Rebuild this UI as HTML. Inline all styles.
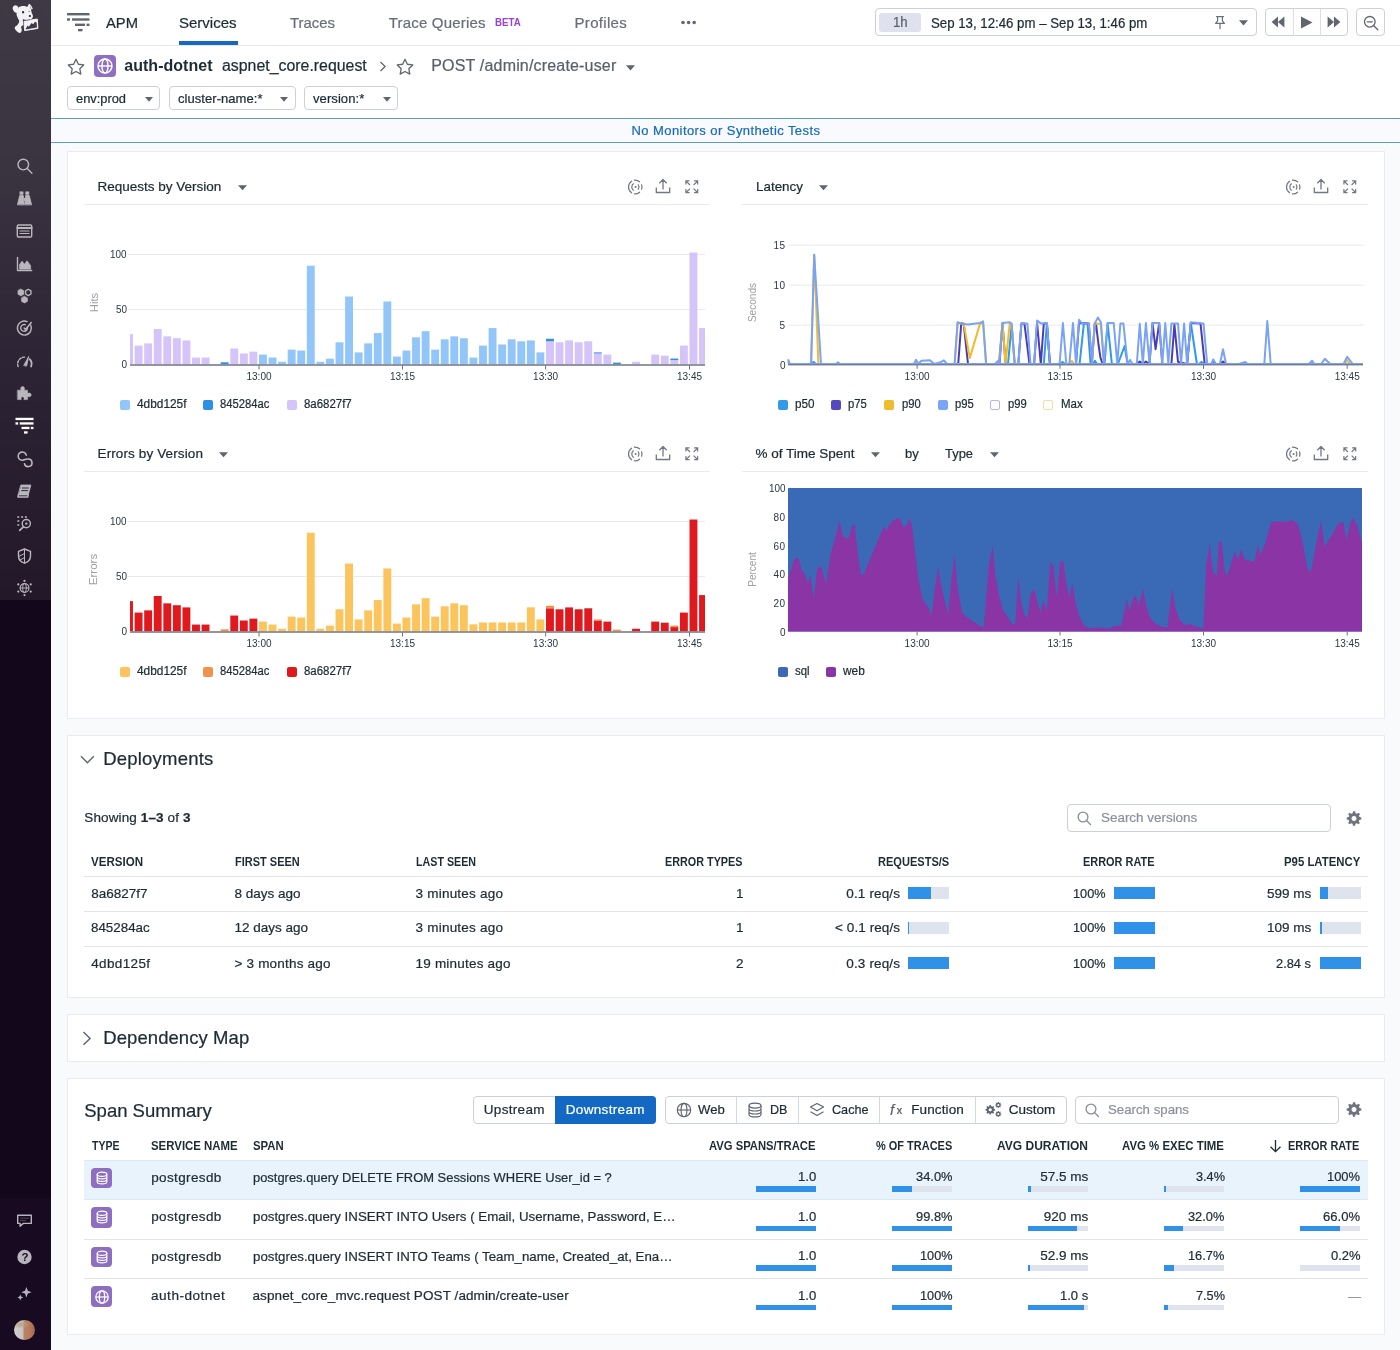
<!DOCTYPE html>
<html lang="en"><head><meta charset="utf-8"><title>APM Service - auth-dotnet</title>
<style>
*{box-sizing:border-box;margin:0;padding:0}
html,body{width:1400px;height:1350px;overflow:hidden;background:#f9fafc;font-family:"Liberation Sans",sans-serif;}
#root{position:relative;width:1400px;height:1350px;overflow:hidden;will-change:transform}
#root>div,#root>span,#root>svg{position:absolute;}
#root>svg{overflow:visible}
#root>span{white-space:nowrap;display:block;transform-origin:0 50%;-webkit-text-stroke:.22px currentColor}
</style></head>
<body><div id="root">
<div style="left:50px;top:0px;width:1350px;height:118px;background:#fff;"></div>
<div style="left:50px;top:45px;width:1350px;height:1px;background:#e6e8ee;"></div>
<div style="left:50px;top:118px;width:1350px;height:25px;background:#f8fafd;border-top:1.5px solid #5b9bd3;border-bottom:1.5px solid #5b9bd3;"></div>
<span style="left:631.50px;top:124.00px;font-size:13px;line-height:13px;color:#1a6bb8;letter-spacing:0.429px;">No Monitors or Synthetic Tests</span>
<div style="left:0px;top:0px;width:50.6px;height:600px;background:linear-gradient(180deg,#3f3945 0%,#3a3340 28%,#2c2334 62%,#221829 100%);"></div>
<div style="left:0px;top:600px;width:50.6px;height:598px;background:#13071b;"></div>
<div style="left:0px;top:1198px;width:50.6px;height:152px;background:#170a21;"></div>
<svg style="left:0;top:0" width="50" height="1350" viewBox="0 0 50 1350"><g fill="#f3f1f5"><ellipse cx="15.9" cy="9" rx="3" ry="3.7" transform="rotate(-22 15.9 9)"/><path d="M18.6 7.6C20 6.2 23.5 5.6 26.2 6.6L27.3 6.9 29 3.8C30.6 4.6 32.2 6.6 32.8 8.9L30.9 9.4C31.4 11 31.6 12.4 31.9 13.4 32.6 14.4 33.1 15.6 32.9 16.8 32.6 18.2 31.8 19 30.6 19.4 28.5 20.3 25 20.3 22.8 19.6L22.9 22 23.2 25.2C22.2 25.6 21.3 26.1 20.9 26.9 22 28.8 22.1 31.4 20.6 32.8 18.6 33.6 16.2 31.2 14.8 28.8 14.3 27.2 15.6 26 17 25.4 18.4 23.6 19.4 22 19.2 20.7 18.6 19.6 18 18.6 17.6 17.6 16.6 15.6 16.2 14.2 16.8 12.6 17.6 11 18.2 9.4 18.6 7.6Z"/><path d="M24 21.3L37.3 19 37.9 28.4 24.6 30.6Z" stroke="#f3f1f5" stroke-width="1" stroke-linejoin="round"/></g><path d="M25.5 29.4L27.5 25.6 28.8 26.8 31.5 23 33.2 24.3 35 21.8 36.6 22.6 37 27.6Z" fill="#3f3945"/><path d="M29.6 5.6L31.6 8.4 30.6 8.8Z" fill="#8b8690"/><ellipse cx="23.1" cy="12.2" rx="1.1" ry="1.25" fill="#2b2530" transform="rotate(-20 23.1 12.2)"/><ellipse cx="29.9" cy="16.1" rx="1.15" ry="1" fill="#2b2530"/><circle cx="29.2" cy="11.4" r=".6" fill="#6b6670"/><path d="M23.2 19.4C25.2 20.6 28 20.5 30 19.4" fill="none" stroke="#4a4450" stroke-width=".7"/><g transform="translate(16.5 158)" fill="none" stroke="#bab6be" stroke-width="1.4" stroke-linecap="round" stroke-linejoin="round"><circle cx="6.8" cy="6.6" r="5.3"/><path d="M10.8 10.6l4.6 4.6"/></g><g transform="translate(16.5 190)" fill="none" stroke="#bab6be" stroke-width="1.4" stroke-linecap="round" stroke-linejoin="round"><path d="M1 14.5L3.2 5.5h3.6l.9 9zM15 14.5L12.8 5.5H9.2l-.9 9z" fill="#bab6be" stroke-width=".8"/><path d="M3.6 1.8h3v2.6h-3zM9.4 1.8h3v2.6h-3z" fill="#bab6be" stroke-width=".6"/><path d="M7.4 8h1.2v3H7.4z" fill="#bab6be" stroke="none"/></g><g transform="translate(16.5 223)" fill="none" stroke="#bab6be" stroke-width="1.4" stroke-linecap="round" stroke-linejoin="round"><rect x="0.8" y="2" width="14.4" height="12" rx="1.2"/><path d="M0.8 5h14.4" stroke-width="2"/><path d="M3.5 8h9M3.5 10.5h9" stroke-width="1.2"/></g><g transform="translate(16.5 256)" fill="none" stroke="#bab6be" stroke-width="1.4" stroke-linecap="round" stroke-linejoin="round"><path d="M1 1.5v13h14.2" /><path d="M3 13V8.5l2.6-3.4 2.3 3.2 2.6-3.6 3.7 5V13z" fill="#bab6be" stroke-width=".6"/></g><g transform="translate(16.5 288)" fill="none" stroke="#bab6be" stroke-width="1.4" stroke-linecap="round" stroke-linejoin="round"><path d="M4.4 1l3 1.7v3.5l-3 1.7-3-1.7V2.7zM8 8.2l3 1.7v3.5l-3 1.7-3-1.7V9.9z" fill="#bab6be" stroke-width=".5"/><path d="M11.8 1.3l2.7 1.6V6l-2.7 1.6L9.1 6V2.9z" stroke-width="1.3"/></g><g transform="translate(16.5 320)" fill="none" stroke="#bab6be" stroke-width="1.4" stroke-linecap="round" stroke-linejoin="round"><path d="M14.3 5.2A7 7 0 1 1 10.6 1.6" /><path d="M10.9 7.2A3.4 3.4 0 1 1 8.7 4.7"/><path d="M7.6 8l1.4 1.5L14.8 2.6" stroke-width="1.5"/></g><g transform="translate(16.5 353)" fill="none" stroke="#bab6be" stroke-width="1.4" stroke-linecap="round" stroke-linejoin="round"><path d="M1.6 13.5A7 7 0 0 1 8.6 4.1" stroke-dasharray="2.1 1.6"/><path d="M13.2 6.2A7 7 0 0 1 14.6 13.5" stroke-width="1.8"/><path d="M7.4 12.2L12.2 3.4l-2 9.4z" fill="#bab6be" stroke-width=".8"/></g><g transform="translate(16.5 385)" fill="none" stroke="#bab6be" stroke-width="1.4" stroke-linecap="round" stroke-linejoin="round"><path d="M1.2 5.2h3.4c-.9-1.9-.1-3.6 1.5-3.6s2.4 1.7 1.5 3.6H11v3.2c1.9-.9 3.7-.1 3.7 1.5s-1.8 2.4-3.7 1.5v3.2H7.4c.6-1.6 0-2.8-1.3-2.8s-1.9 1.2-1.3 2.8H1.2z" fill="#bab6be" stroke-width=".6"/></g><g fill="#ffffff"><rect x="15.5" y="417.8" width="18" height="2.3"/><rect x="15.5" y="422.3" width="2.6" height="2.3"/><rect x="19.7" y="422.3" width="13.8" height="2.3"/><rect x="21.5" y="426.8" width="8" height="2.3"/><rect x="30.8" y="426.8" width="2.7" height="2.3"/><rect x="24" y="431.3" width="3.6" height="2.3"/></g><g transform="translate(16.5 450.5)" fill="none" stroke="#bab6be" stroke-width="1.4" stroke-linecap="round" stroke-linejoin="round"><path d="M9.8 4.6A4.1 4.1 0 1 0 6.3 9.7C8.2 9.4 9.6 8.3 11.5 8.5A3.8 3.8 0 1 1 8 13.2" stroke-width="1.6"/></g><g transform="translate(16.5 483)" fill="none" stroke="#bab6be" stroke-width="1.4" stroke-linecap="round" stroke-linejoin="round"><path d="M4.6 2h9.8l-2.7 10H1.9z" fill="#bab6be" stroke-width=".8"/><path d="M1.9 12l-.5 2h9.8l.5-2" /><path d="M5.8 5h6M5.1 7.6h6" stroke="#2e2636" stroke-width="1"/></g><g transform="translate(16.5 515)" fill="none" stroke="#bab6be" stroke-width="1.4" stroke-linecap="round" stroke-linejoin="round"><path d="M0.8 2h2M4.6 2h2M8.4 2h2M0.8 6h2M0.8 10h2" stroke-width="1.7" stroke-linecap="butt"/><circle cx="9.8" cy="8.6" r="4.1"/><path d="M6.8 11.8L3.2 15.4" stroke-width="1.7"/><circle cx="9.8" cy="8.6" r="1.2" fill="#bab6be" stroke="none"/></g><g transform="translate(16.5 548)" fill="none" stroke="#bab6be" stroke-width="1.4" stroke-linecap="round" stroke-linejoin="round"><path d="M8 1l6 2.3v4.7c0 3.5-2.5 6-6 7.2C4.5 14 2 11.5 2 8V3.3z"/><path d="M8 1v14.2M8 5.5L2.3 8.5M8 9.5l-4.6 2.6" stroke-width="1"/></g><g transform="translate(16.5 580)" fill="none" stroke="#bab6be" stroke-width="1.4" stroke-linecap="round" stroke-linejoin="round"><circle cx="8" cy="8" r="4.4" stroke-width="1.1"/><ellipse cx="8" cy="8" rx="1.9" ry="4.4" stroke-width=".9"/><path d="M3.6 8h8.8" stroke-width=".9"/><g fill="#bab6be" stroke="none"><circle cx="8" cy="0.9" r="1.1"/><circle cx="8" cy="15.1" r="1.1"/><circle cx="1.8" cy="4.4" r="1.1"/><circle cx="14.2" cy="4.4" r="1.1"/><circle cx="1.8" cy="11.6" r="1.1"/><circle cx="14.2" cy="11.6" r="1.1"/></g></g><g transform="translate(16.5 1213)" fill="none" stroke="#b9b3bf" stroke-width="1.4" stroke-linecap="round" stroke-linejoin="round"><path d="M1.2 2.2h13.6v8.2H6.8L3.6 13.2v-2.8H1.2z"/><path d="M4 5.2h8M4 7.6h5" stroke-width=".7" opacity=".5"/></g><circle cx="24.5" cy="1257" r="7.2" fill="#b9b3bf"/><g fill="#b9b3bf"><path d="M26.4 1287l1.4 3.8 3.8 1.4-3.8 1.4-1.4 3.8-1.4-3.8-3.8-1.4 3.8-1.4z"/><path d="M20.3 1294.4l.85 2.15 2.15.85-2.15.85-.85 2.15-.85-2.15-2.15-.85 2.15-.85z"/></g></svg>
<span style="left:21.60px;top:1251.57px;font-size:11.5px;line-height:11.5px;color:#190d22;font-weight:700;-webkit-text-stroke:0;">?</span>
<div style="left:14.2px;top:1319.5px;width:20.8px;height:20.8px;border-radius:50%;background:radial-gradient(ellipse 45% 22% at 32% 22%,#b8a488 0%,rgba(184,164,136,0) 100%),linear-gradient(90deg,#d2cdce 0%,#c9c4c2 40%,#b98464 50%,#b6785a 78%,#96685a 100%);"></div>
<svg style="left:66px;top:12px" width="25" height="21" viewBox="0 0 25 21"><g fill="#61656f"><rect x="1" y="1" width="22.5" height="2.4"/><rect x="1" y="6.3" width="3" height="2.4"/><rect x="6" y="6.3" width="17.5" height="2.4"/><rect x="9" y="11.6" width="10" height="2.4"/><rect x="20.5" y="11.6" width="3" height="2.4"/><rect x="12" y="16.9" width="4.5" height="2.4"/></g></svg>
<span style="left:105.50px;top:14.80px;font-size:15px;line-height:15px;color:#1c2b34;transform:scaleX(0.9841);">APM</span>
<span style="left:179.00px;top:14.80px;font-size:15px;line-height:15px;color:#1c2b34;">Services</span>
<div style="left:179px;top:40.5px;width:59px;height:4.5px;background:#1668c1;"></div>
<span style="left:290.00px;top:14.80px;font-size:15px;line-height:15px;color:#6a6e7b;transform:scaleX(0.9934);">Traces</span>
<span style="left:388.75px;top:14.80px;font-size:15px;line-height:15px;color:#6a6e7b;letter-spacing:0.189px;">Trace Queries</span>
<span style="left:495.00px;top:17.31px;font-size:10.5px;line-height:10.5px;color:#9a40e0;font-weight:700;-webkit-text-stroke:0;transform:scaleX(0.9258);">BETA</span>
<span style="left:574.50px;top:14.80px;font-size:15px;line-height:15px;color:#6a6e7b;letter-spacing:0.317px;">Profiles</span>
<svg style="left:680px;top:19px" width="18" height="7" viewBox="0 0 18 7"><g fill="#61656f"><circle cx="3" cy="3.5" r="1.8"/><circle cx="8.6" cy="3.5" r="1.8"/><circle cx="14.2" cy="3.5" r="1.8"/></g></svg>
<div style="left:874.5px;top:8.3px;width:382px;height:27.7px;background:#fff;border:1px solid #ccd0dc;border-radius:4px;"></div>
<div style="left:879.3px;top:12.5px;width:42px;height:19.3px;background:#dfe2ee;border-radius:3px;"></div>
<span style="left:893.20px;top:15.45px;font-size:14px;line-height:14px;color:#5a5f6e;transform:scaleX(0.9372);">1h</span>
<span style="left:931.00px;top:15.65px;font-size:14px;line-height:14px;color:#1c2b34;transform:scaleX(0.9453);">Sep 13, 12:46 pm – Sep 13, 1:46 pm</span>
<svg style="left:1213px;top:15px" width="14" height="15" viewBox="0 0 14 15"><g fill="none" stroke="#6a6e7b" stroke-width="1.2" stroke-linejoin="round" stroke-linecap="round"><path d="M3.5 1.6h7M4.6 1.6v4.2L2.6 8.4h8.8L9.4 5.8V1.6M7 8.4v5.2"/></g></svg>
<svg style="left:1238.5px;top:19.5px" width="9" height="6" viewBox="0 0 9 6"><path d="M0 0.3h9L4.5 5.5z" fill="#61656f"/></svg>
<div style="left:1265px;top:8.3px;width:83px;height:27.7px;background:#fff;border:1px solid #ccd0dc;border-radius:4px;"></div>
<div style="left:1292.5px;top:9px;width:1px;height:26.5px;background:#dcdfe8;"></div>
<div style="left:1320px;top:9px;width:1px;height:26.5px;background:#dcdfe8;"></div>
<svg style="left:1271px;top:16px" width="14" height="12" viewBox="0 0 14 12"><path d="M7 0.5v11L0.6 6zM13.4 0.5v11L7 6z" fill="#61656f"/></svg>
<svg style="left:1300px;top:15.5px" width="13" height="13" viewBox="0 0 13 13"><path d="M1 0.5l11.5 6L1 12.5z" fill="#61656f"/></svg>
<svg style="left:1327px;top:16px" width="14" height="12" viewBox="0 0 14 12"><path d="M0.6 0.5v11L7 6zM7 0.5v11L13.4 6z" fill="#61656f"/></svg>
<div style="left:1356px;top:8.3px;width:28.5px;height:27.7px;background:#fff;border:1px solid #ccd0dc;border-radius:4px;"></div>
<svg style="left:1362.5px;top:14.5px" width="16" height="16" viewBox="0 0 16 16"><g fill="none" stroke="#61656f" stroke-width="1.3" stroke-linecap="round"><circle cx="6.8" cy="6.8" r="5.3"/><path d="M10.8 10.8l4 4M4.3 6.8h5"/></g></svg>
<svg style="left:67px;top:57.5px" width="18" height="18" viewBox="0 0 18 18"><path d="M9 1.3l2.35 4.95 5.4.7-3.95 3.75 1 5.4L9 13.45 4.2 16.1l1-5.4L1.25 6.95l5.4-.7z" fill="none" stroke="#61656f" stroke-width="1.3" stroke-linejoin="round"/></svg>
<div style="left:93.75px;top:55px;width:22px;height:22px;background:#8e6fc2;border-radius:4px;"><svg style="position:absolute;left:2px;top:2px" width="18" height="18" viewBox="0 0 16 16"><g fill="none" stroke="#fff" stroke-width="1.25"><circle cx="8" cy="8" r="6.2"/><ellipse cx="8" cy="8" rx="2.7" ry="6.2"/><path d="M1.8 8h12.4"/></g></svg></div>
<span style="left:124.25px;top:57.76px;font-size:16px;line-height:16px;color:#1c2b34;font-weight:700;-webkit-text-stroke:0;letter-spacing:0.027px;">auth-dotnet</span>
<span style="left:221.50px;top:57.76px;font-size:16px;line-height:16px;color:#1c2b34;transform:scaleX(0.9923);">aspnet_core.request</span>
<svg style="left:379px;top:61px" width="8" height="11" viewBox="0 0 8 11"><path d="M1.5 1l4.6 4.5L1.5 10" fill="none" stroke="#61656f" stroke-width="1.3"/></svg>
<svg style="left:395.5px;top:57.5px" width="18" height="18" viewBox="0 0 18 18"><path d="M9 1.3l2.35 4.95 5.4.7-3.95 3.75 1 5.4L9 13.45 4.2 16.1l1-5.4L1.25 6.95l5.4-.7z" fill="none" stroke="#61656f" stroke-width="1.3" stroke-linejoin="round"/></svg>
<span style="left:431.25px;top:57.76px;font-size:16px;line-height:16px;color:#5a5f6c;letter-spacing:0.177px;">POST /admin/create-user</span>
<svg style="left:625.5px;top:64.5px" width="9" height="6" viewBox="0 0 9 6"><path d="M0 0.3h9L4.5 5.5z" fill="#61656f"/></svg>
<div style="left:67px;top:86.25px;width:93px;height:24px;background:#fff;border:1px solid #ccd0dc;border-radius:4px;"></div>
<span style="left:76.25px;top:91.50px;font-size:13px;line-height:13px;color:#1c2b34;transform:scaleX(0.9883);">env:prod</span>
<svg style="left:144.5px;top:96.5px" width="8" height="5" viewBox="0 0 8 5"><path d="M0 0h8L4 4.8z" fill="#61656f"/></svg>
<div style="left:168.75px;top:86.25px;width:126.75px;height:24px;background:#fff;border:1px solid #ccd0dc;border-radius:4px;"></div>
<span style="left:178.00px;top:91.50px;font-size:13px;line-height:13px;color:#1c2b34;letter-spacing:0.053px;">cluster-name:*</span>
<svg style="left:280px;top:96.5px" width="8" height="5" viewBox="0 0 8 5"><path d="M0 0h8L4 4.8z" fill="#61656f"/></svg>
<div style="left:303.75px;top:86.25px;width:94.25px;height:24px;background:#fff;border:1px solid #ccd0dc;border-radius:4px;"></div>
<span style="left:313.00px;top:91.50px;font-size:13px;line-height:13px;color:#1c2b34;letter-spacing:0.084px;">version:*</span>
<svg style="left:382.5px;top:96.5px" width="8" height="5" viewBox="0 0 8 5"><path d="M0 0h8L4 4.8z" fill="#61656f"/></svg>
<div style="left:67px;top:151px;width:1317.5px;height:567.5px;background:#fff;border:1px solid #e9ebf0;"></div>
<span style="left:97.50px;top:179.87px;font-size:13.5px;line-height:13.5px;color:#1c2b34;">Requests by Version</span>
<svg style="left:237.5px;top:184.5px" width="9" height="6" viewBox="0 0 9 6"><path d="M0 0.2h9L4.5 5.2z" fill="#5f6471"/></svg>
<div style="left:84px;top:204px;width:626px;height:1.2px;background:#e9ebf1;"></div>
<svg style="left:626.5px;top:178.5px" width="16" height="16" viewBox="0 0 16 16"><g fill="none" stroke="#737783" stroke-width="1.2" stroke-linecap="round"><path d="M4.6 2.2A7 7 0 0 0 4.6 13.8M7.4 1.1A7 7 0 0 1 12.6 2.8M7.4 14.9A7 7 0 0 0 12.6 13.2M14.6 5.8A7 7 0 0 1 14.6 10.2"/><path d="M6.4 4.8A4 4 0 0 0 6.4 11.2M11.3 5.8A4 4 0 0 1 11.3 10.2"/></g><circle cx="8.6" cy="8" r="1" fill="#737783"/></svg>
<svg style="left:655px;top:178px" width="16" height="16" viewBox="0 0 16 16"><g fill="none" stroke="#737783" stroke-width="1.3" stroke-linejoin="round"><path d="M1.3 9.5v5h13.4v-5M8 11.5V1.5M4.3 5.2L8 1.5l3.7 3.7"/></g></svg>
<svg style="left:684.7px;top:179.7px" width="13.6" height="13.6" viewBox="0 0 15 15"><g fill="none" stroke="#737783" stroke-width="1.3"><path d="M1 5V1h4M1.2 1.2l4.3 4.3M10 1h4v4M13.8 1.2L9.5 5.5M1 10v4h4M1.2 13.8l4.3-4.3M14 10v4h-4M13.8 13.8L9.5 9.5"/></g></svg>
<span style="left:755.50px;top:179.87px;font-size:13.5px;line-height:13.5px;color:#1c2b34;transform:scaleX(0.9937);">Latency</span>
<svg style="left:818.75px;top:184.5px" width="9" height="6" viewBox="0 0 9 6"><path d="M0 0.2h9L4.5 5.2z" fill="#5f6471"/></svg>
<div style="left:742px;top:204px;width:626px;height:1.2px;background:#e9ebf1;"></div>
<svg style="left:1284.5px;top:178.5px" width="16" height="16" viewBox="0 0 16 16"><g fill="none" stroke="#737783" stroke-width="1.2" stroke-linecap="round"><path d="M4.6 2.2A7 7 0 0 0 4.6 13.8M7.4 1.1A7 7 0 0 1 12.6 2.8M7.4 14.9A7 7 0 0 0 12.6 13.2M14.6 5.8A7 7 0 0 1 14.6 10.2"/><path d="M6.4 4.8A4 4 0 0 0 6.4 11.2M11.3 5.8A4 4 0 0 1 11.3 10.2"/></g><circle cx="8.6" cy="8" r="1" fill="#737783"/></svg>
<svg style="left:1313px;top:178px" width="16" height="16" viewBox="0 0 16 16"><g fill="none" stroke="#737783" stroke-width="1.3" stroke-linejoin="round"><path d="M1.3 9.5v5h13.4v-5M8 11.5V1.5M4.3 5.2L8 1.5l3.7 3.7"/></g></svg>
<svg style="left:1342.7px;top:179.7px" width="13.6" height="13.6" viewBox="0 0 15 15"><g fill="none" stroke="#737783" stroke-width="1.3"><path d="M1 5V1h4M1.2 1.2l4.3 4.3M10 1h4v4M13.8 1.2L9.5 5.5M1 10v4h4M1.2 13.8l4.3-4.3M14 10v4h-4M13.8 13.8L9.5 9.5"/></g></svg>
<span style="left:97.50px;top:446.87px;font-size:13.5px;line-height:13.5px;color:#1c2b34;letter-spacing:0.122px;">Errors by Version</span>
<svg style="left:218.5px;top:451.5px" width="9" height="6" viewBox="0 0 9 6"><path d="M0 0.2h9L4.5 5.2z" fill="#5f6471"/></svg>
<div style="left:84px;top:471px;width:626px;height:1.2px;background:#e9ebf1;"></div>
<svg style="left:626.5px;top:445.5px" width="16" height="16" viewBox="0 0 16 16"><g fill="none" stroke="#737783" stroke-width="1.2" stroke-linecap="round"><path d="M4.6 2.2A7 7 0 0 0 4.6 13.8M7.4 1.1A7 7 0 0 1 12.6 2.8M7.4 14.9A7 7 0 0 0 12.6 13.2M14.6 5.8A7 7 0 0 1 14.6 10.2"/><path d="M6.4 4.8A4 4 0 0 0 6.4 11.2M11.3 5.8A4 4 0 0 1 11.3 10.2"/></g><circle cx="8.6" cy="8" r="1" fill="#737783"/></svg>
<svg style="left:655px;top:445px" width="16" height="16" viewBox="0 0 16 16"><g fill="none" stroke="#737783" stroke-width="1.3" stroke-linejoin="round"><path d="M1.3 9.5v5h13.4v-5M8 11.5V1.5M4.3 5.2L8 1.5l3.7 3.7"/></g></svg>
<svg style="left:684.7px;top:446.7px" width="13.6" height="13.6" viewBox="0 0 15 15"><g fill="none" stroke="#737783" stroke-width="1.3"><path d="M1 5V1h4M1.2 1.2l4.3 4.3M10 1h4v4M13.8 1.2L9.5 5.5M1 10v4h4M1.2 13.8l4.3-4.3M14 10v4h-4M13.8 13.8L9.5 9.5"/></g></svg>
<span style="left:755.50px;top:446.87px;font-size:13.5px;line-height:13.5px;color:#1c2b34;">% of Time Spent</span>
<svg style="left:870.75px;top:451.5px" width="9" height="6" viewBox="0 0 9 6"><path d="M0 0.2h9L4.5 5.2z" fill="#5f6471"/></svg>
<span style="left:905.00px;top:446.87px;font-size:13.5px;line-height:13.5px;color:#1c2b34;transform:scaleX(0.9639);">by</span>
<span style="left:945.00px;top:446.87px;font-size:13.5px;line-height:13.5px;color:#1c2b34;transform:scaleX(0.9562);">Type</span>
<svg style="left:989.5px;top:451.5px" width="9" height="6" viewBox="0 0 9 6"><path d="M0 0.2h9L4.5 5.2z" fill="#5f6471"/></svg>
<div style="left:742px;top:471px;width:626px;height:1.2px;background:#e9ebf1;"></div>
<svg style="left:1284.5px;top:445.5px" width="16" height="16" viewBox="0 0 16 16"><g fill="none" stroke="#737783" stroke-width="1.2" stroke-linecap="round"><path d="M4.6 2.2A7 7 0 0 0 4.6 13.8M7.4 1.1A7 7 0 0 1 12.6 2.8M7.4 14.9A7 7 0 0 0 12.6 13.2M14.6 5.8A7 7 0 0 1 14.6 10.2"/><path d="M6.4 4.8A4 4 0 0 0 6.4 11.2M11.3 5.8A4 4 0 0 1 11.3 10.2"/></g><circle cx="8.6" cy="8" r="1" fill="#737783"/></svg>
<svg style="left:1313px;top:445px" width="16" height="16" viewBox="0 0 16 16"><g fill="none" stroke="#737783" stroke-width="1.3" stroke-linejoin="round"><path d="M1.3 9.5v5h13.4v-5M8 11.5V1.5M4.3 5.2L8 1.5l3.7 3.7"/></g></svg>
<svg style="left:1342.7px;top:446.7px" width="13.6" height="13.6" viewBox="0 0 15 15"><g fill="none" stroke="#737783" stroke-width="1.3"><path d="M1 5V1h4M1.2 1.2l4.3 4.3M10 1h4v4M13.8 1.2L9.5 5.5M1 10v4h4M1.2 13.8l4.3-4.3M14 10v4h-4M13.8 13.8L9.5 9.5"/></g></svg>
<svg style="left:129px;top:240px" width="582" height="135" viewBox="0 0 582 135"><defs><clipPath id="cp0"><rect x="1" y="0" width="575" height="124.5"/></clipPath></defs><path d="M-1 69.5H576" stroke="#e8eaf0" stroke-width="1"/><path d="M-1 14.5H576" stroke="#e8eaf0" stroke-width="1"/><g clip-path="url(#cp0)"><rect x="-3.94" y="94.14" width="7.9" height="30.36" fill="#d5c4f8"/><rect x="5.63" y="105.58" width="7.9" height="18.92" fill="#d5c4f8"/><rect x="15.20" y="103.38" width="7.9" height="21.12" fill="#d5c4f8"/><rect x="24.76" y="88.97" width="7.9" height="35.53" fill="#d5c4f8"/><rect x="34.33" y="96.34" width="7.9" height="28.16" fill="#d5c4f8"/><rect x="43.90" y="98.21" width="7.9" height="26.29" fill="#d5c4f8"/><rect x="53.46" y="100.41" width="7.9" height="24.09" fill="#d5c4f8"/><rect x="63.03" y="117.57" width="7.9" height="6.93" fill="#d5c4f8"/><rect x="72.60" y="117.57" width="7.9" height="6.93" fill="#d5c4f8"/><rect x="91.73" y="122.30" width="7.9" height="2.20" fill="#2f8fe4"/><rect x="101.30" y="108.55" width="7.9" height="15.95" fill="#d5c4f8"/><rect x="110.87" y="113.50" width="7.9" height="11.00" fill="#d5c4f8"/><rect x="120.43" y="111.63" width="7.9" height="12.87" fill="#d5c4f8"/><rect x="130.00" y="114.60" width="7.9" height="9.90" fill="#92c6f9"/><rect x="139.57" y="117.57" width="7.9" height="6.93" fill="#92c6f9"/><rect x="149.13" y="121.75" width="7.9" height="2.75" fill="#92c6f9"/><rect x="158.70" y="109.65" width="7.9" height="14.85" fill="#92c6f9"/><rect x="168.27" y="110.53" width="7.9" height="13.97" fill="#92c6f9"/><rect x="177.83" y="25.72" width="7.9" height="98.78" fill="#92c6f9"/><rect x="187.40" y="121.75" width="7.9" height="2.75" fill="#92c6f9"/><rect x="196.97" y="118.67" width="7.9" height="5.83" fill="#92c6f9"/><rect x="206.54" y="102.28" width="7.9" height="22.22" fill="#92c6f9"/><rect x="216.10" y="56.52" width="7.9" height="67.98" fill="#92c6f9"/><rect x="225.67" y="112.40" width="7.9" height="12.10" fill="#92c6f9"/><rect x="235.24" y="103.38" width="7.9" height="21.12" fill="#92c6f9"/><rect x="244.80" y="93.04" width="7.9" height="31.46" fill="#92c6f9"/><rect x="254.37" y="61.47" width="7.9" height="63.03" fill="#92c6f9"/><rect x="263.94" y="116.58" width="7.9" height="7.92" fill="#92c6f9"/><rect x="273.50" y="110.53" width="7.9" height="13.97" fill="#92c6f9"/><rect x="283.07" y="97.33" width="7.9" height="27.17" fill="#92c6f9"/><rect x="292.64" y="91.17" width="7.9" height="33.33" fill="#92c6f9"/><rect x="302.21" y="109.65" width="7.9" height="14.85" fill="#92c6f9"/><rect x="311.77" y="99.31" width="7.9" height="25.19" fill="#92c6f9"/><rect x="321.34" y="96.34" width="7.9" height="28.16" fill="#92c6f9"/><rect x="330.91" y="98.21" width="7.9" height="26.29" fill="#92c6f9"/><rect x="340.47" y="117.57" width="7.9" height="6.93" fill="#92c6f9"/><rect x="350.04" y="105.58" width="7.9" height="18.92" fill="#92c6f9"/><rect x="359.61" y="88.09" width="7.9" height="36.41" fill="#92c6f9"/><rect x="369.18" y="104.48" width="7.9" height="20.02" fill="#92c6f9"/><rect x="378.74" y="99.31" width="7.9" height="25.19" fill="#92c6f9"/><rect x="388.31" y="101.29" width="7.9" height="23.21" fill="#92c6f9"/><rect x="397.88" y="100.41" width="7.9" height="24.09" fill="#92c6f9"/><rect x="407.44" y="112.40" width="7.9" height="12.10" fill="#92c6f9"/><rect x="417.01" y="101.29" width="7.9" height="23.21" fill="#d5c4f8"/><rect x="417.01" y="98.76" width="7.9" height="2.53" fill="#2f8fe4"/><rect x="426.58" y="102.28" width="7.9" height="22.22" fill="#d5c4f8"/><rect x="436.14" y="100.41" width="7.9" height="24.09" fill="#d5c4f8"/><rect x="445.71" y="102.28" width="7.9" height="22.22" fill="#d5c4f8"/><rect x="455.28" y="101.29" width="7.9" height="23.21" fill="#d5c4f8"/><rect x="464.85" y="113.50" width="7.9" height="11.00" fill="#d5c4f8"/><rect x="464.85" y="112.40" width="7.9" height="1.10" fill="#2f8fe4"/><rect x="474.41" y="114.60" width="7.9" height="9.90" fill="#d5c4f8"/><rect x="483.98" y="122.63" width="7.9" height="1.87" fill="#2f8fe4"/><rect x="503.11" y="121.75" width="7.9" height="2.75" fill="#d5c4f8"/><rect x="522.25" y="114.60" width="7.9" height="9.90" fill="#d5c4f8"/><rect x="531.81" y="115.70" width="7.9" height="8.80" fill="#d5c4f8"/><rect x="541.38" y="120.10" width="7.9" height="4.40" fill="#d5c4f8"/><rect x="541.38" y="118.56" width="7.9" height="1.54" fill="#2f8fe4"/><rect x="550.95" y="105.58" width="7.9" height="18.92" fill="#d5c4f8"/><rect x="560.51" y="12.52" width="7.9" height="111.98" fill="#d5c4f8"/><rect x="570.08" y="88.09" width="7.9" height="36.41" fill="#d5c4f8"/></g><path d="M1 125.1H576" stroke="#6f7380" stroke-width="1.5"/><path d="M130 125.5v4" stroke="#6f7380" stroke-width="1"/><path d="M273.5 125.5v4" stroke="#6f7380" stroke-width="1"/><path d="M416.6 125.5v4" stroke="#6f7380" stroke-width="1"/><path d="M560.5 125.5v4" stroke="#6f7380" stroke-width="1"/></svg>
<span style="left:110.00px;top:249.84px;font-size:10px;line-height:10px;color:#2a3740;-webkit-text-stroke:0;transform:scaleX(0.9888);">100</span>
<span style="left:115.50px;top:304.94px;font-size:10px;line-height:10px;color:#2a3740;-webkit-text-stroke:0;transform:scaleX(0.9888);">50</span>
<span style="left:121.50px;top:359.94px;font-size:10px;line-height:10px;color:#2a3740;-webkit-text-stroke:0;">0</span>
<span style="left:246.50px;top:371.64px;font-size:10px;line-height:10px;color:#2a3740;-webkit-text-stroke:0;">13:00</span>
<span style="left:390.00px;top:371.64px;font-size:10px;line-height:10px;color:#2a3740;-webkit-text-stroke:0;">13:15</span>
<span style="left:533.10px;top:371.64px;font-size:10px;line-height:10px;color:#2a3740;-webkit-text-stroke:0;">13:30</span>
<span style="left:677.00px;top:371.64px;font-size:10px;line-height:10px;color:#2a3740;-webkit-text-stroke:0;">13:45</span>
<span style="left:84.50px;top:296.50px;font-size:11px;line-height:11px;color:#9fa0a9;transform:rotate(-90deg) scaleX(1.0158);transform-origin:50% 50%;-webkit-text-stroke:0;">Hits</span>
<div style="left:120.25px;top:399.6px;width:10.2px;height:10.2px;background:#92c6f9;border-radius:2px;"></div>
<span style="left:137.00px;top:398.44px;font-size:12px;line-height:12px;color:#1c2b34;transform:scaleX(0.9888);">4dbd125f</span>
<div style="left:203.25px;top:399.6px;width:10.2px;height:10.2px;background:#2f8fe4;border-radius:2px;"></div>
<span style="left:220.25px;top:398.44px;font-size:12px;line-height:12px;color:#1c2b34;transform:scaleX(0.9342);">845284ac</span>
<div style="left:287px;top:399.6px;width:10.2px;height:10.2px;background:#d5c4f8;border-radius:2px;"></div>
<span style="left:303.75px;top:398.44px;font-size:12px;line-height:12px;color:#1c2b34;transform:scaleX(0.9538);">8a6827f7</span>
<svg style="left:129px;top:507px" width="582" height="135" viewBox="0 0 582 135"><defs><clipPath id="cp267"><rect x="1" y="0" width="575" height="124.5"/></clipPath></defs><path d="M-1 69.5H576" stroke="#e8eaf0" stroke-width="1"/><path d="M-1 14.5H576" stroke="#e8eaf0" stroke-width="1"/><g clip-path="url(#cp267)"><rect x="-3.94" y="94.14" width="7.9" height="30.36" fill="#e0191e"/><rect x="5.63" y="105.58" width="7.9" height="18.92" fill="#e0191e"/><rect x="15.20" y="103.38" width="7.9" height="21.12" fill="#e0191e"/><rect x="24.76" y="88.97" width="7.9" height="35.53" fill="#e0191e"/><rect x="34.33" y="96.34" width="7.9" height="28.16" fill="#e0191e"/><rect x="43.90" y="98.21" width="7.9" height="26.29" fill="#e0191e"/><rect x="53.46" y="100.41" width="7.9" height="24.09" fill="#e0191e"/><rect x="63.03" y="117.57" width="7.9" height="6.93" fill="#e0191e"/><rect x="72.60" y="117.57" width="7.9" height="6.93" fill="#e0191e"/><rect x="91.73" y="122.30" width="7.9" height="2.20" fill="#f2924a"/><rect x="101.30" y="108.55" width="7.9" height="15.95" fill="#e0191e"/><rect x="110.87" y="113.50" width="7.9" height="11.00" fill="#e0191e"/><rect x="120.43" y="111.63" width="7.9" height="12.87" fill="#e0191e"/><rect x="130.00" y="114.60" width="7.9" height="9.90" fill="#fcc45c"/><rect x="139.57" y="117.57" width="7.9" height="6.93" fill="#fcc45c"/><rect x="149.13" y="121.75" width="7.9" height="2.75" fill="#fcc45c"/><rect x="158.70" y="109.65" width="7.9" height="14.85" fill="#fcc45c"/><rect x="168.27" y="110.53" width="7.9" height="13.97" fill="#fcc45c"/><rect x="177.83" y="25.72" width="7.9" height="98.78" fill="#fcc45c"/><rect x="187.40" y="121.75" width="7.9" height="2.75" fill="#fcc45c"/><rect x="196.97" y="118.67" width="7.9" height="5.83" fill="#fcc45c"/><rect x="206.54" y="102.28" width="7.9" height="22.22" fill="#fcc45c"/><rect x="216.10" y="56.52" width="7.9" height="67.98" fill="#fcc45c"/><rect x="225.67" y="112.40" width="7.9" height="12.10" fill="#fcc45c"/><rect x="235.24" y="103.38" width="7.9" height="21.12" fill="#fcc45c"/><rect x="244.80" y="93.04" width="7.9" height="31.46" fill="#fcc45c"/><rect x="254.37" y="61.47" width="7.9" height="63.03" fill="#fcc45c"/><rect x="263.94" y="116.58" width="7.9" height="7.92" fill="#fcc45c"/><rect x="273.50" y="110.53" width="7.9" height="13.97" fill="#fcc45c"/><rect x="283.07" y="97.33" width="7.9" height="27.17" fill="#fcc45c"/><rect x="292.64" y="91.17" width="7.9" height="33.33" fill="#fcc45c"/><rect x="302.21" y="109.65" width="7.9" height="14.85" fill="#fcc45c"/><rect x="311.77" y="99.31" width="7.9" height="25.19" fill="#fcc45c"/><rect x="321.34" y="96.34" width="7.9" height="28.16" fill="#fcc45c"/><rect x="330.91" y="98.21" width="7.9" height="26.29" fill="#fcc45c"/><rect x="340.47" y="117.35" width="7.9" height="7.15" fill="#fcc45c"/><rect x="350.04" y="115.48" width="7.9" height="9.02" fill="#fcc45c"/><rect x="359.61" y="115.48" width="7.9" height="9.02" fill="#fcc45c"/><rect x="369.18" y="115.48" width="7.9" height="9.02" fill="#fcc45c"/><rect x="378.74" y="115.48" width="7.9" height="9.02" fill="#fcc45c"/><rect x="388.31" y="115.48" width="7.9" height="9.02" fill="#fcc45c"/><rect x="397.88" y="100.30" width="7.9" height="24.20" fill="#fcc45c"/><rect x="407.44" y="112.40" width="7.9" height="12.10" fill="#fcc45c"/><rect x="417.01" y="101.29" width="7.9" height="23.21" fill="#e0191e"/><rect x="417.01" y="98.76" width="7.9" height="2.53" fill="#f2924a"/><rect x="426.58" y="102.28" width="7.9" height="22.22" fill="#e0191e"/><rect x="436.14" y="100.41" width="7.9" height="24.09" fill="#e0191e"/><rect x="445.71" y="102.28" width="7.9" height="22.22" fill="#e0191e"/><rect x="455.28" y="101.29" width="7.9" height="23.21" fill="#e0191e"/><rect x="464.85" y="113.50" width="7.9" height="11.00" fill="#e0191e"/><rect x="464.85" y="112.40" width="7.9" height="1.10" fill="#f2924a"/><rect x="474.41" y="114.60" width="7.9" height="9.90" fill="#e0191e"/><rect x="483.98" y="122.63" width="7.9" height="1.87" fill="#f2924a"/><rect x="503.11" y="121.75" width="7.9" height="2.75" fill="#e0191e"/><rect x="522.25" y="114.60" width="7.9" height="9.90" fill="#e0191e"/><rect x="531.81" y="115.70" width="7.9" height="8.80" fill="#e0191e"/><rect x="541.38" y="120.10" width="7.9" height="4.40" fill="#e0191e"/><rect x="541.38" y="118.56" width="7.9" height="1.54" fill="#f2924a"/><rect x="550.95" y="105.58" width="7.9" height="18.92" fill="#e0191e"/><rect x="560.51" y="12.52" width="7.9" height="111.98" fill="#e0191e"/><rect x="570.08" y="88.09" width="7.9" height="36.41" fill="#e0191e"/></g><path d="M1 125.1H576" stroke="#6f7380" stroke-width="1.5"/><path d="M130 125.5v4" stroke="#6f7380" stroke-width="1"/><path d="M273.5 125.5v4" stroke="#6f7380" stroke-width="1"/><path d="M416.6 125.5v4" stroke="#6f7380" stroke-width="1"/><path d="M560.5 125.5v4" stroke="#6f7380" stroke-width="1"/></svg>
<span style="left:110.00px;top:516.83px;font-size:10px;line-height:10px;color:#2a3740;-webkit-text-stroke:0;transform:scaleX(0.9888);">100</span>
<span style="left:115.50px;top:571.93px;font-size:10px;line-height:10px;color:#2a3740;-webkit-text-stroke:0;transform:scaleX(0.9888);">50</span>
<span style="left:121.50px;top:626.93px;font-size:10px;line-height:10px;color:#2a3740;-webkit-text-stroke:0;">0</span>
<span style="left:246.50px;top:638.63px;font-size:10px;line-height:10px;color:#2a3740;-webkit-text-stroke:0;">13:00</span>
<span style="left:390.00px;top:638.63px;font-size:10px;line-height:10px;color:#2a3740;-webkit-text-stroke:0;">13:15</span>
<span style="left:533.10px;top:638.63px;font-size:10px;line-height:10px;color:#2a3740;-webkit-text-stroke:0;">13:30</span>
<span style="left:677.00px;top:638.63px;font-size:10px;line-height:10px;color:#2a3740;-webkit-text-stroke:0;">13:45</span>
<span style="left:79.00px;top:563.50px;font-size:11px;line-height:11px;color:#9fa0a9;transform:rotate(-90deg) scaleX(1.0500);transform-origin:50% 50%;-webkit-text-stroke:0;">Errors</span>
<div style="left:120.25px;top:666.6px;width:10.2px;height:10.2px;background:#fcc45c;border-radius:2px;"></div>
<span style="left:137.00px;top:665.44px;font-size:12px;line-height:12px;color:#1c2b34;transform:scaleX(0.9888);">4dbd125f</span>
<div style="left:203.25px;top:666.6px;width:10.2px;height:10.2px;background:#f2924a;border-radius:2px;"></div>
<span style="left:220.25px;top:665.44px;font-size:12px;line-height:12px;color:#1c2b34;transform:scaleX(0.9342);">845284ac</span>
<div style="left:287px;top:666.6px;width:10.2px;height:10.2px;background:#e0191e;border-radius:2px;"></div>
<span style="left:303.75px;top:665.44px;font-size:12px;line-height:12px;color:#1c2b34;transform:scaleX(0.9538);">8a6827f7</span>
<svg style="left:787px;top:235px" width="582" height="140" viewBox="0 0 582 140"><path d="M2 10.2H577" stroke="#e8eaf0" stroke-width="1"/><path d="M2 50.2H577" stroke="#e8eaf0" stroke-width="1"/><path d="M2 90.1H577" stroke="#e8eaf0" stroke-width="1"/><polyline points="1.1,129.0 3.0,129.0 24.5,129.0 26.5,126.9 29.0,129.0 208.0,129.0 210.7,126.9 213.0,129.0 221.0,129.0 224.6,90.4 227.7,129.0 256.8,129.0 259.9,88.4 262.9,129.0 273.0,129.0 275.5,126.9 278.0,129.0 292.6,129.0 296.9,88.4 300.5,88.4 303.6,129.0 306.0,129.0 307.9,125.7 310.0,129.0 317.6,129.0 320.6,88.4 324.9,129.0 330.9,129.0 337.6,111.0 340.6,129.0 400.1,129.0 403.8,88.0 409.9,129.0 412.0,129.0 414.5,126.9 417.0,129.0 575.4,129.0" fill="none" stroke="#2f9ae8" stroke-width="2" stroke-linejoin="round"/><polyline points="1.1,126.9 3.0,129.0 168.0,129.0 171.2,129.0 174.3,88.0 176.7,88.8 181.0,129.0 184.0,129.0 212.5,129.0 215.5,88.0 218.6,129.0 231.3,129.0 234.4,88.4 237.4,88.4 242.5,129.0 247.1,129.0 250.1,88.0 253.8,129.0 256.8,88.4 259.9,88.4 262.9,129.0 289.0,129.0 292.0,88.0 301.8,88.4 304.8,129.0 307.8,88.4 309.0,88.8 311.5,109.5 313.5,122.9 315.7,129.0 350.0,129.0 352.8,126.5 355.8,129.0 358.9,126.5 362.5,129.0 365.5,88.0 368.6,114.2 372.2,88.0 375.3,129.0 384.4,129.0 387.4,89.6 391.0,126.9 400.1,129.0 403.8,88.0 413.5,88.4 417.7,129.0 424.0,129.0 426.3,126.5 429.0,129.0 433.0,129.0 436.0,126.5 439.0,129.0 575.4,129.0" fill="none" stroke="#4b3cb6" stroke-width="2" stroke-linejoin="round"/><polyline points="1.1,125.3 3.0,129.0 24.1,129.0 27.2,19.7 31.4,129.0 35.0,129.0 167.6,129.0 170.6,88.0 176.7,88.4 182.8,122.9 193.1,88.4 196.1,88.0 199.1,129.0 212.0,129.0 215.5,88.0 218.5,129.0 222.8,88.0 224.6,88.8 227.7,129.0 282.0,129.0 284.8,125.7 287.0,129.0 304.8,129.0 307.8,88.4 310.9,88.8 313.9,88.8 316.9,129.0 557.0,129.0 560.2,125.3 563.0,129.0 575.4,129.0" fill="none" stroke="#f0bb2c" stroke-width="2" stroke-linejoin="round"/><polyline points="1.1,124.3 2.6,129.0 5.9,129.0 20.9,129.0 24.1,129.0 27.2,19.7 34.0,129.0 49.0,129.0 51.0,127.3 53.0,129.0 61.0,129.0 63.0,129.0 126.9,129.0 129.1,124.8 131.2,129.0 134.4,125.7 143.0,125.3 147.3,129.0 153.7,127.2 156.9,125.3 160.1,129.0 167.6,129.0 170.6,87.2 173.6,88.4 180.9,89.6 193.1,88.0 196.1,86.4 199.1,129.0 208.9,129.0 210.7,126.1 211.9,129.0 215.5,88.0 222.8,87.2 224.6,88.8 227.7,129.0 231.3,129.0 234.4,88.4 240.4,88.4 243.5,129.0 247.1,129.0 250.1,85.6 253.8,88.4 259.9,88.0 262.9,129.0 272.6,129.0 275.9,88.0 279.3,129.0 282.3,129.0 286.0,88.0 289.0,129.0 292.0,84.8 295.1,88.4 301.8,88.4 304.8,129.0 307.8,88.4 310.9,82.5 313.9,87.2 316.9,129.0 320.6,88.0 326.7,88.0 330.3,129.0 333.4,88.4 336.4,88.4 340.6,129.0 343.1,124.9 345.5,129.0 349.8,129.0 352.8,88.8 355.8,129.0 358.9,88.0 362.5,129.0 365.5,88.0 372.2,88.0 375.3,129.0 378.3,88.0 381.3,129.0 384.4,88.4 391.0,88.4 394.1,129.0 397.1,88.4 400.1,129.0 403.8,87.2 416.5,88.4 420.2,129.0 424.4,129.0 426.3,124.5 428.7,129.0 432.9,129.0 436.0,114.2 439.0,129.0 452.1,129.0 458.2,126.9 460.6,129.0 477.3,129.0 480.3,86.0 483.7,129.0 522.0,129.0 525.0,125.7 527.4,129.0 534.1,129.0 537.8,123.7 543.2,129.0 556.6,129.0 560.2,121.8 565.7,129.0 575.4,129.0" fill="none" stroke="#7aa3f3" stroke-width="2" stroke-linejoin="round"/><path d="M1 129H575.4" stroke="#7aa3f3" stroke-width="1.8"/><path d="M1 129.7H576" stroke="#6f7380" stroke-width="1.4" opacity=".8"/><path d="M130.1 129.8v4" stroke="#6f7380" stroke-width="1"/><path d="M273 129.8v4" stroke="#6f7380" stroke-width="1"/><path d="M416.5 129.8v4" stroke="#6f7380" stroke-width="1"/><path d="M560.2 129.8v4" stroke="#6f7380" stroke-width="1"/></svg>
<span style="left:773.50px;top:241.33px;font-size:10px;line-height:10px;color:#2a3740;-webkit-text-stroke:0;letter-spacing:0.375px;">15</span>
<span style="left:773.50px;top:281.34px;font-size:10px;line-height:10px;color:#2a3740;-webkit-text-stroke:0;letter-spacing:0.375px;">10</span>
<span style="left:779.50px;top:321.24px;font-size:10px;line-height:10px;color:#2a3740;-webkit-text-stroke:0;">5</span>
<span style="left:780.00px;top:360.64px;font-size:10px;line-height:10px;color:#2a3740;-webkit-text-stroke:0;">0</span>
<span style="left:904.60px;top:371.64px;font-size:10px;line-height:10px;color:#2a3740;-webkit-text-stroke:0;">13:00</span>
<span style="left:1047.50px;top:371.64px;font-size:10px;line-height:10px;color:#2a3740;-webkit-text-stroke:0;">13:15</span>
<span style="left:1191.00px;top:371.64px;font-size:10px;line-height:10px;color:#2a3740;-webkit-text-stroke:0;">13:30</span>
<span style="left:1334.70px;top:371.64px;font-size:10px;line-height:10px;color:#2a3740;-webkit-text-stroke:0;">13:45</span>
<span style="left:730.50px;top:297.10px;font-size:11px;line-height:11px;color:#9fa0a9;transform:rotate(-90deg) scaleX(0.9163);transform-origin:50% 50%;-webkit-text-stroke:0;">Seconds</span>
<div style="left:778px;top:399.6px;width:10.2px;height:10.2px;background:#3399e8;border-radius:2px;"></div>
<span style="left:795.00px;top:398.44px;font-size:12px;line-height:12px;color:#1c2b34;transform:scaleX(0.9735);">p50</span>
<div style="left:831.25px;top:399.6px;width:10.2px;height:10.2px;background:#5848c0;border-radius:2px;"></div>
<span style="left:848.25px;top:398.44px;font-size:12px;line-height:12px;color:#1c2b34;transform:scaleX(0.9360);">p75</span>
<div style="left:884.25px;top:399.6px;width:10.2px;height:10.2px;background:#f0bb2c;border-radius:2px;"></div>
<span style="left:901.75px;top:398.44px;font-size:12px;line-height:12px;color:#1c2b34;transform:scaleX(0.9360);">p90</span>
<div style="left:937.5px;top:399.6px;width:10.2px;height:10.2px;background:#7aa5f4;border-radius:2px;"></div>
<span style="left:955.00px;top:398.44px;font-size:12px;line-height:12px;color:#1c2b34;transform:scaleX(0.9360);">p95</span>
<div style="left:990.2px;top:399.6px;width:10.2px;height:10.2px;border:1.3px solid #b9b1f0;border-radius:2px;background:#fff;"></div>
<span style="left:1008.00px;top:398.44px;font-size:12px;line-height:12px;color:#1c2b34;transform:scaleX(0.9360);">p99</span>
<div style="left:1043.2px;top:399.6px;width:10.2px;height:10.2px;border:1.3px solid #f5dea0;border-radius:2px;background:#fff;"></div>
<span style="left:1060.75px;top:398.44px;font-size:12px;line-height:12px;color:#1c2b34;transform:scaleX(0.9593);">Max</span>
<svg style="left:787px;top:482px" width="582" height="160" viewBox="0 0 582 160"><rect x="1" y="6" width="574" height="143.5" fill="#3a69b5"/><path d="M1,149.5 L1.1,96.6 L3.7,88.0 L6.9,78.4 L10.1,75.1 L12.3,78.4 L14.4,88.0 L17.6,91.2 L20.9,100.8 L23.4,93.4 L26.9,116.9 L29.9,88.0 L32.6,83.7 L34.8,85.9 L39.1,101.9 L43.4,73.0 L47.6,58.0 L52.6,38.7 L55.6,54.1 L58.4,55.4 L61.6,56.9 L64.8,44.1 L67.6,41.9 L70.6,68.7 L74.0,93.4 L76.6,92.3 L96.9,44.1 L99.1,48.4 L104.4,39.8 L110.4,36.1 L113.0,36.6 L116.2,45.1 L119.4,44.1 L122.2,36.6 L124.8,41.9 L128.0,68.7 L131.2,96.6 L135.5,116.9 L140.8,124.4 L144.7,133.0 L147.7,107.3 L151.1,84.8 L154.1,103.0 L158.0,120.1 L161.2,131.9 L164.4,98.7 L167.6,73.0 L170.8,107.3 L175.1,130.8 L179.4,135.1 L194.4,144.8 L196.6,145.8 L201.9,83.7 L205.6,63.4 L208.3,92.3 L211.6,111.6 L215.8,127.6 L220.1,134.1 L225.5,142.6 L228.3,141.6 L231.3,94.4 L234.1,120.1 L237.3,133.0 L240.5,136.2 L243.7,111.6 L246.9,107.3 L250.1,118.0 L253.3,130.8 L256.6,119.1 L259.8,128.7 L263.4,79.4 L266.2,83.7 L269.8,115.8 L273.3,79.4 L276.3,79.0 L279.1,100.8 L282.3,116.9 L283.0,109.4 L285.6,101.9 L288.4,120.1 L292.6,135.1 L296.9,143.7 L302.3,146.3 L310.9,145.4 L321.6,146.5 L328.0,144.1 L334.4,143.7 L337.0,130.8 L339.8,116.9 L342.6,128.7 L346.2,115.8 L349.0,113.7 L352.0,123.3 L355.9,106.2 L359.1,124.4 L363.4,136.2 L368.7,142.0 L375.1,144.8 L380.5,145.4 L382.6,126.6 L385.4,106.2 L388.0,124.4 L392.3,137.3 L397.6,143.3 L403.0,142.0 L409.4,144.8 L416.3,146.3 L419.1,83.7 L422.7,62.3 L426.1,90.1 L429.8,93.4 L431.9,60.1 L434.7,59.1 L437.7,90.1 L440.5,93.4 L447.6,69.8 L451.2,77.3 L454.0,67.0 L457.6,77.3 L465.1,79.4 L467.7,78.4 L471.1,62.3 L473.3,73.0 L478.0,62.3 L484.4,39.8 L497.3,39.8 L505.8,38.3 L510.6,41.9 L514.4,53.7 L520.8,88.0 L524.1,89.1 L529.4,60.1 L534.1,38.7 L537.6,64.4 L544.4,53.7 L550.8,41.9 L556.2,39.8 L559.4,58.0 L563.3,40.9 L566.3,35.5 L570.1,43.0 L574.8,60.1 L575,149.5Z" fill="#8a34a6"/><path d="M130.1 149.5v4" stroke="#6f7380" stroke-width="1"/><path d="M273 149.5v4" stroke="#6f7380" stroke-width="1"/><path d="M416.5 149.5v4" stroke="#6f7380" stroke-width="1"/><path d="M560.2 149.5v4" stroke="#6f7380" stroke-width="1"/></svg>
<span style="left:768.50px;top:484.14px;font-size:10px;line-height:10px;color:#2a3740;-webkit-text-stroke:0;transform:scaleX(0.9888);">100</span>
<span style="left:773.50px;top:512.84px;font-size:10px;line-height:10px;color:#2a3740;-webkit-text-stroke:0;letter-spacing:0.375px;">80</span>
<span style="left:773.50px;top:541.53px;font-size:10px;line-height:10px;color:#2a3740;-webkit-text-stroke:0;letter-spacing:0.375px;">60</span>
<span style="left:773.50px;top:570.24px;font-size:10px;line-height:10px;color:#2a3740;-webkit-text-stroke:0;letter-spacing:0.375px;">40</span>
<span style="left:773.50px;top:598.93px;font-size:10px;line-height:10px;color:#2a3740;-webkit-text-stroke:0;letter-spacing:0.375px;">20</span>
<span style="left:780.00px;top:627.63px;font-size:10px;line-height:10px;color:#2a3740;-webkit-text-stroke:0;">0</span>
<span style="left:904.60px;top:638.63px;font-size:10px;line-height:10px;color:#2a3740;-webkit-text-stroke:0;">13:00</span>
<span style="left:1047.50px;top:638.63px;font-size:10px;line-height:10px;color:#2a3740;-webkit-text-stroke:0;">13:15</span>
<span style="left:1191.00px;top:638.63px;font-size:10px;line-height:10px;color:#2a3740;-webkit-text-stroke:0;">13:30</span>
<span style="left:1334.70px;top:638.63px;font-size:10px;line-height:10px;color:#2a3740;-webkit-text-stroke:0;">13:45</span>
<span style="left:734.00px;top:564.20px;font-size:11px;line-height:11px;color:#9fa0a9;transform:rotate(-90deg) scaleX(0.9132);transform-origin:50% 50%;-webkit-text-stroke:0;">Percent</span>
<div style="left:778px;top:666.6px;width:10.2px;height:10.2px;background:#3a69b5;border-radius:2px;"></div>
<span style="left:795.00px;top:665.44px;font-size:12px;line-height:12px;color:#1c2b34;transform:scaleX(0.9450);">sql</span>
<div style="left:826.25px;top:666.6px;width:10.2px;height:10.2px;background:#8a34a6;border-radius:2px;"></div>
<span style="left:843.25px;top:665.44px;font-size:12px;line-height:12px;color:#1c2b34;transform:scaleX(0.9879);">web</span>
<div style="left:67px;top:735px;width:1317.5px;height:262.5px;background:#fff;border:1px solid #e9ebf0;"></div>
<svg style="left:79.5px;top:754.5px" width="15" height="10" viewBox="0 0 15 10"><path d="M1 1.2l6.4 6.6 6.4-6.6" fill="none" stroke="#5f6471" stroke-width="1.4"/></svg>
<span style="left:103.25px;top:750.14px;font-size:18.5px;line-height:18.5px;color:#1c2b34;letter-spacing:0.203px;">Deployments</span>
<span style="left:84.25px;top:810.57px;font-size:13.5px;line-height:13.5px;color:#1c2b34;letter-spacing:0.126px;">Showing <b>1–3</b> of <b>3</b></span>
<div style="left:1067px;top:803.75px;width:264px;height:28px;background:#fff;border:1px solid #ccd0dc;border-radius:4px;"></div>
<svg style="left:1077px;top:810.8px" width="15" height="15" viewBox="0 0 15 15"><g fill="none" stroke="#8a8d9a" stroke-width="1.3" stroke-linecap="round"><circle cx="6" cy="6" r="4.9"/><path d="M9.7 9.7l3.8 3.8"/></g></svg>
<span style="left:1100.75px;top:811.07px;font-size:13.5px;line-height:13.5px;color:#8d909d;transform:scaleX(0.9944);">Search versions</span>
<svg style="left:1345.5px;top:810.5px" width="16" height="15" viewBox="0 0 15.7 14.3"><path fill="#70747f" fill-rule="evenodd" d="M7 0h2l.4 1.9 1.3.55 1.65-1.05 1.4 1.4-1.05 1.65.55 1.3L15 6.15v2l-1.9.4-.55 1.3 1.05 1.65-1.4 1.4-1.65-1.05-1.3.55L8.85 14.3h-2l-.4-1.9-1.3-.55-1.65 1.05-1.4-1.4 1.05-1.65-.55-1.3L.700 8.15v-2l1.9-.4.55-1.3L2.1 2.8l1.4-1.4 1.65 1.05 1.3-.55zM7.85 4.7a2.45 2.45 0 1 0 .01 0z"/></svg>
<span style="left:91.25px;top:856.09px;font-size:12px;line-height:12px;color:#1c2b34;font-weight:700;-webkit-text-stroke:0;transform:scaleX(0.9627);">VERSION</span>
<span style="left:234.50px;top:856.09px;font-size:12px;line-height:12px;color:#1c2b34;font-weight:700;-webkit-text-stroke:0;transform:scaleX(0.9160);">FIRST SEEN</span>
<span style="left:415.50px;top:856.09px;font-size:12px;line-height:12px;color:#1c2b34;font-weight:700;-webkit-text-stroke:0;transform:scaleX(0.8910);">LAST SEEN</span>
<span style="left:665.00px;top:856.09px;font-size:12px;line-height:12px;color:#1c2b34;font-weight:700;-webkit-text-stroke:0;transform:scaleX(0.9010);">ERROR TYPES</span>
<span style="left:877.50px;top:856.09px;font-size:12px;line-height:12px;color:#1c2b34;font-weight:700;-webkit-text-stroke:0;transform:scaleX(0.9210);">REQUESTS/S</span>
<span style="left:1083.00px;top:856.09px;font-size:12px;line-height:12px;color:#1c2b34;font-weight:700;-webkit-text-stroke:0;transform:scaleX(0.9114);">ERROR RATE</span>
<span style="left:1283.75px;top:856.09px;font-size:12px;line-height:12px;color:#1c2b34;font-weight:700;-webkit-text-stroke:0;transform:scaleX(0.9476);">P95 LATENCY</span>
<div style="left:84px;top:876.25px;width:1284px;height:1px;background:#e1e4eb;"></div>
<div style="left:84px;top:911.25px;width:1284px;height:1px;background:#e1e4eb;"></div>
<div style="left:84px;top:946px;width:1284px;height:1px;background:#e1e4eb;"></div>
<span style="left:91.25px;top:886.57px;font-size:13.5px;line-height:13.5px;color:#1c2b34;">8a6827f7</span>
<span style="left:234.50px;top:886.57px;font-size:13.5px;line-height:13.5px;color:#1c2b34;">8 days ago</span>
<span style="left:415.50px;top:886.57px;font-size:13.5px;line-height:13.5px;color:#1c2b34;letter-spacing:0.224px;">3 minutes ago</span>
<span style="left:736.00px;top:886.57px;font-size:13.5px;line-height:13.5px;color:#1c2b34;">1</span>
<span style="left:846.25px;top:886.57px;font-size:13.5px;line-height:13.5px;color:#1c2b34;letter-spacing:0.152px;">0.1 req/s</span>
<div style="left:908.25px;top:887px;width:40.75px;height:12.2px;background:#dfe3ee;"></div>
<div style="left:908.25px;top:887px;width:22.4125px;height:12.2px;background:#2f92e8;"></div>
<span style="left:1073.00px;top:886.57px;font-size:13.5px;line-height:13.5px;color:#1c2b34;transform:scaleX(0.9412);">100%</span>
<div style="left:1114.25px;top:887px;width:40.25px;height:12.2px;background:#dfe3ee;"></div>
<div style="left:1114.25px;top:887px;width:40.25px;height:12.2px;background:#2f92e8;"></div>
<span style="left:1267.00px;top:886.57px;font-size:13.5px;line-height:13.5px;color:#1c2b34;">599 ms</span>
<div style="left:1320px;top:887px;width:40.5px;height:12.2px;background:#dfe3ee;"></div>
<div style="left:1320px;top:887px;width:8.1px;height:12.2px;background:#2f92e8;"></div>
<span style="left:91.25px;top:921.32px;font-size:13.5px;line-height:13.5px;color:#1c2b34;transform:scaleX(0.9905);">845284ac</span>
<span style="left:234.50px;top:921.32px;font-size:13.5px;line-height:13.5px;color:#1c2b34;">12 days ago</span>
<span style="left:415.50px;top:921.32px;font-size:13.5px;line-height:13.5px;color:#1c2b34;letter-spacing:0.224px;">3 minutes ago</span>
<span style="left:736.00px;top:921.32px;font-size:13.5px;line-height:13.5px;color:#1c2b34;">1</span>
<span style="left:835.00px;top:921.32px;font-size:13.5px;line-height:13.5px;color:#1c2b34;letter-spacing:0.083px;">&lt; 0.1 req/s</span>
<div style="left:908.25px;top:922px;width:40.75px;height:12.2px;background:#dfe3ee;"></div>
<div style="left:908.25px;top:922px;width:1.2px;height:12.2px;background:#2f92e8;"></div>
<span style="left:1073.00px;top:921.32px;font-size:13.5px;line-height:13.5px;color:#1c2b34;transform:scaleX(0.9412);">100%</span>
<div style="left:1114.25px;top:922px;width:40.25px;height:12.2px;background:#dfe3ee;"></div>
<div style="left:1114.25px;top:922px;width:40.25px;height:12.2px;background:#2f92e8;"></div>
<span style="left:1267.00px;top:921.32px;font-size:13.5px;line-height:13.5px;color:#1c2b34;">109 ms</span>
<div style="left:1320px;top:922px;width:40.5px;height:12.2px;background:#dfe3ee;"></div>
<div style="left:1320px;top:922px;width:1.62px;height:12.2px;background:#2f92e8;"></div>
<span style="left:91.25px;top:956.57px;font-size:13.5px;line-height:13.5px;color:#1c2b34;letter-spacing:0.348px;">4dbd125f</span>
<span style="left:234.50px;top:956.57px;font-size:13.5px;line-height:13.5px;color:#1c2b34;letter-spacing:0.196px;">&gt; 3 months ago</span>
<span style="left:415.50px;top:956.57px;font-size:13.5px;line-height:13.5px;color:#1c2b34;letter-spacing:0.207px;">19 minutes ago</span>
<span style="left:736.00px;top:956.57px;font-size:13.5px;line-height:13.5px;color:#1c2b34;">2</span>
<span style="left:846.25px;top:956.57px;font-size:13.5px;line-height:13.5px;color:#1c2b34;letter-spacing:0.152px;">0.3 req/s</span>
<div style="left:908.25px;top:957px;width:40.75px;height:12.2px;background:#dfe3ee;"></div>
<div style="left:908.25px;top:957px;width:40.75px;height:12.2px;background:#2f92e8;"></div>
<span style="left:1073.00px;top:956.57px;font-size:13.5px;line-height:13.5px;color:#1c2b34;transform:scaleX(0.9412);">100%</span>
<div style="left:1114.25px;top:957px;width:40.25px;height:12.2px;background:#dfe3ee;"></div>
<div style="left:1114.25px;top:957px;width:40.25px;height:12.2px;background:#2f92e8;"></div>
<span style="left:1276.25px;top:956.57px;font-size:13.5px;line-height:13.5px;color:#1c2b34;transform:scaleX(0.9516);">2.84 s</span>
<div style="left:1320px;top:957px;width:40.5px;height:12.2px;background:#dfe3ee;"></div>
<div style="left:1320px;top:957px;width:40.5px;height:12.2px;background:#2f92e8;"></div>
<div style="left:67px;top:1014px;width:1317.5px;height:47.5px;background:#fff;border:1px solid #e9ebf0;"></div>
<svg style="left:82px;top:1030.5px" width="10" height="15" viewBox="0 0 10 15"><path d="M1.5 1l6.6 6.4-6.6 6.4" fill="none" stroke="#5f6471" stroke-width="1.4"/></svg>
<span style="left:103.25px;top:1029.34px;font-size:18.5px;line-height:18.5px;color:#1c2b34;letter-spacing:0.076px;">Dependency Map</span>
<div style="left:67px;top:1078px;width:1317.5px;height:256.5px;background:#fff;border:1px solid #e9ebf0;"></div>
<span style="left:84.25px;top:1101.64px;font-size:18.5px;line-height:18.5px;color:#1c2b34;">Span Summary</span>
<div style="left:472.5px;top:1095.5px;width:183.5px;height:28.3px;background:#fff;border:1px solid #ccd0dc;border-radius:4px;"></div>
<div style="left:555px;top:1095.5px;width:101px;height:28.3px;background:#1268c3;border-radius:0 4px 4px 0;"></div>
<span style="left:483.75px;top:1103.07px;font-size:13.5px;line-height:13.5px;color:#1c2b34;letter-spacing:0.319px;">Upstream</span>
<span style="left:565.75px;top:1103.07px;font-size:13.5px;line-height:13.5px;color:#fff;letter-spacing:0.330px;">Downstream</span>
<div style="left:664.5px;top:1095.5px;width:402.5px;height:28.3px;background:#fff;border:1px solid #ccd0dc;border-radius:4px;"></div>
<div style="left:735.5px;top:1096.5px;width:1px;height:26.3px;background:#d5d8e2;"></div>
<div style="left:797.5px;top:1096.5px;width:1px;height:26.3px;background:#d5d8e2;"></div>
<div style="left:879.25px;top:1096.5px;width:1px;height:26.3px;background:#d5d8e2;"></div>
<div style="left:974.6px;top:1096.5px;width:1px;height:26.3px;background:#d5d8e2;"></div>
<svg style="left:675.5px;top:1102px" width="16" height="16" viewBox="0 0 16 16"><g fill="none" stroke="#5f6471" stroke-width="1.15"><circle cx="8" cy="8" r="6.7"/><ellipse cx="8" cy="8" rx="2.9" ry="6.7"/><path d="M1.3 8h13.4"/></g></svg>
<span style="left:698.25px;top:1103.07px;font-size:13.5px;line-height:13.5px;color:#1c2b34;transform:scaleX(0.9722);">Web</span>
<svg style="left:746.5px;top:1102px" width="16" height="16" viewBox="0 0 16 16"><g fill="none" stroke="#5f6471" stroke-width="1.15"><ellipse cx="8" cy="3.6" rx="6" ry="2.5"/><path d="M2 3.6v8.8c0 1.4 2.7 2.5 6 2.5s6-1.1 6-2.5V3.6M2 6.5c0 1.4 2.7 2.5 6 2.5s6-1.1 6-2.5M2 9.5c0 1.4 2.7 2.5 6 2.5s6-1.1 6-2.5"/></g></svg>
<span style="left:769.50px;top:1103.07px;font-size:13.5px;line-height:13.5px;color:#1c2b34;transform:scaleX(0.9326);">DB</span>
<svg style="left:808.5px;top:1102px" width="16" height="16" viewBox="0 0 16 16"><g fill="none" stroke="#5f6471" stroke-width="1.15" stroke-linejoin="round"><path d="M8 1.5l6.5 3.6L8 8.7 1.5 5.1z"/><path d="M1.5 9.8L8 13.4l6.5-3.6"/></g></svg>
<span style="left:831.75px;top:1103.07px;font-size:13.5px;line-height:13.5px;color:#1c2b34;transform:scaleX(0.9351);">Cache</span>
<span style="left:890.00px;top:1102.10px;font-size:15px;line-height:15px;color:#5f6471;font-family:"Liberation Serif",serif;"><i>f</i></span>
<span style="left:896.50px;top:1104.61px;font-size:10.5px;line-height:10.5px;color:#5f6471;font-weight:700;-webkit-text-stroke:0;">x</span>
<span style="left:911.25px;top:1103.07px;font-size:13.5px;line-height:13.5px;color:#1c2b34;letter-spacing:0.103px;">Function</span>
<svg style="left:985px;top:1104.5px" width="10.5" height="9.6" viewBox="0 0 15.7 14.3"><path fill="#5f6471" fill-rule="evenodd" d="M7 0h2l.4 1.9 1.3.55 1.65-1.05 1.4 1.4-1.05 1.65.55 1.3L15 6.15v2l-1.9.4-.55 1.3 1.05 1.65-1.4 1.4-1.65-1.05-1.3.55L8.85 14.3h-2l-.4-1.9-1.3-.55-1.65 1.05-1.4-1.4 1.05-1.65-.55-1.3L.700 8.15v-2l1.9-.4.55-1.3L2.1 2.8l1.4-1.4 1.65 1.05 1.3-.55zM7.85 4.7a2.45 2.45 0 1 0 .01 0z"/></svg>
<svg style="left:995.3px;top:1102px" width="6.6" height="6" viewBox="0 0 15.7 14.3"><path fill="#5f6471" fill-rule="evenodd" d="M7 0h2l.4 1.9 1.3.55 1.65-1.05 1.4 1.4-1.05 1.65.55 1.3L15 6.15v2l-1.9.4-.55 1.3 1.05 1.65-1.4 1.4-1.65-1.05-1.3.55L8.85 14.3h-2l-.4-1.9-1.3-.55-1.65 1.05-1.4-1.4 1.05-1.65-.55-1.3L.700 8.15v-2l1.9-.4.55-1.3L2.1 2.8l1.4-1.4 1.65 1.05 1.3-.55zM7.85 4.7a2.45 2.45 0 1 0 .01 0z"/></svg>
<svg style="left:995.3px;top:1110.6px" width="6.6" height="6" viewBox="0 0 15.7 14.3"><path fill="#5f6471" fill-rule="evenodd" d="M7 0h2l.4 1.9 1.3.55 1.65-1.05 1.4 1.4-1.05 1.65.55 1.3L15 6.15v2l-1.9.4-.55 1.3 1.05 1.65-1.4 1.4-1.65-1.05-1.3.55L8.85 14.3h-2l-.4-1.9-1.3-.55-1.65 1.05-1.4-1.4 1.05-1.65-.55-1.3L.700 8.15v-2l1.9-.4.55-1.3L2.1 2.8l1.4-1.4 1.65 1.05 1.3-.55zM7.85 4.7a2.45 2.45 0 1 0 .01 0z"/></svg>
<span style="left:1008.70px;top:1103.07px;font-size:13.5px;line-height:13.5px;color:#1c2b34;">Custom</span>
<div style="left:1075.3px;top:1095.5px;width:263.5px;height:28.3px;background:#fff;border:1px solid #ccd0dc;border-radius:4px;"></div>
<svg style="left:1085px;top:1102.5px" width="15" height="15" viewBox="0 0 15 15"><g fill="none" stroke="#8a8d9a" stroke-width="1.3" stroke-linecap="round"><circle cx="6" cy="6" r="4.9"/><path d="M9.7 9.7l3.8 3.8"/></g></svg>
<span style="left:1108.30px;top:1103.07px;font-size:13.5px;line-height:13.5px;color:#8d909d;transform:scaleX(0.9811);">Search spans</span>
<svg style="left:1345.5px;top:1102.3px" width="16" height="15" viewBox="0 0 15.7 14.3"><path fill="#70747f" fill-rule="evenodd" d="M7 0h2l.4 1.9 1.3.55 1.65-1.05 1.4 1.4-1.05 1.65.55 1.3L15 6.15v2l-1.9.4-.55 1.3 1.05 1.65-1.4 1.4-1.65-1.05-1.3.55L8.85 14.3h-2l-.4-1.9-1.3-.55-1.65 1.05-1.4-1.4 1.05-1.65-.55-1.3L.700 8.15v-2l1.9-.4.55-1.3L2.1 2.8l1.4-1.4 1.65 1.05 1.3-.55zM7.85 4.7a2.45 2.45 0 1 0 .01 0z"/></svg>
<span style="left:91.75px;top:1139.84px;font-size:12px;line-height:12px;color:#1c2b34;font-weight:700;-webkit-text-stroke:0;transform:scaleX(0.8774);">TYPE</span>
<span style="left:151.25px;top:1139.84px;font-size:12px;line-height:12px;color:#1c2b34;font-weight:700;-webkit-text-stroke:0;transform:scaleX(0.9518);">SERVICE NAME</span>
<span style="left:252.50px;top:1139.84px;font-size:12px;line-height:12px;color:#1c2b34;font-weight:700;-webkit-text-stroke:0;transform:scaleX(0.9475);">SPAN</span>
<span style="left:709.25px;top:1139.84px;font-size:12px;line-height:12px;color:#1c2b34;font-weight:700;-webkit-text-stroke:0;transform:scaleX(0.9377);">AVG SPANS/TRACE</span>
<span style="left:875.75px;top:1139.84px;font-size:12px;line-height:12px;color:#1c2b34;font-weight:700;-webkit-text-stroke:0;transform:scaleX(0.9149);">% OF TRACES</span>
<span style="left:997.00px;top:1139.84px;font-size:12px;line-height:12px;color:#1c2b34;font-weight:700;-webkit-text-stroke:0;letter-spacing:0.010px;">AVG DURATION</span>
<span style="left:1122.00px;top:1139.84px;font-size:12px;line-height:12px;color:#1c2b34;font-weight:700;-webkit-text-stroke:0;transform:scaleX(0.9520);">AVG % EXEC TIME</span>
<span style="left:1288.40px;top:1139.84px;font-size:12px;line-height:12px;color:#1c2b34;font-weight:700;-webkit-text-stroke:0;transform:scaleX(0.9088);">ERROR RATE</span>
<svg style="left:1268.5px;top:1138.5px" width="13" height="14" viewBox="0 0 13 14"><path d="M6.5 1v11.5M1.5 7.7l5 5 5-5" fill="none" stroke="#1c2b34" stroke-width="1.3"/></svg>
<div style="left:84px;top:1159.5px;width:1284px;height:40px;background:#e9f3fc;border-top:1px solid #dbe7f3;border-bottom:1px solid #dbe7f3;"></div>
<div style="left:84px;top:1238.75px;width:1284px;height:1px;background:#e1e4eb;"></div>
<div style="left:84px;top:1278.25px;width:1284px;height:1px;background:#e1e4eb;"></div>
<div style="left:91.25px;top:1167.5px;width:20.5px;height:20.5px;background:#8d6ec0;border-radius:4px;"><svg style="position:absolute;left:2.25px;top:2.25px" width="16" height="16" viewBox="0 0 16 16"><g fill="none" stroke="#fff" stroke-width="1.2"><ellipse cx="8" cy="4.2" rx="4.8" ry="2.1"/><path d="M3.2 4.2v7.6c0 1.15 2.15 2.1 4.8 2.1s4.8-.95 4.8-2.1V4.2M3.2 6.7c0 1.15 2.15 2.1 4.8 2.1s4.8-.95 4.8-2.1M3.2 9.25c0 1.15 2.15 2.1 4.8 2.1s4.8-.95 4.8-2.1"/></g></svg></div>
<span style="left:151.25px;top:1170.57px;font-size:13.5px;line-height:13.5px;color:#1c2b34;letter-spacing:0.356px;">postgresdb</span>
<span style="left:252.50px;top:1170.57px;font-size:13.5px;line-height:13.5px;color:#1c2b34;transform:scaleX(0.9573);">postgres.query DELETE FROM Sessions WHERE User_id = ?</span>
<span style="left:798.10px;top:1170.07px;font-size:13.5px;line-height:13.5px;color:#1c2b34;transform:scaleX(0.9717);">1.0</span>
<div style="left:755.75px;top:1186.25px;width:60.6px;height:5.3px;background:#dfe3ee;"></div>
<div style="left:755.75px;top:1186.25px;width:60.6px;height:5.3px;background:#2f92e8;"></div>
<span style="left:915.85px;top:1170.07px;font-size:13.5px;line-height:13.5px;color:#1c2b34;transform:scaleX(0.9535);">34.0%</span>
<div style="left:891.75px;top:1186.25px;width:60.6px;height:5.3px;background:#dfe3ee;"></div>
<div style="left:891.75px;top:1186.25px;width:20.604px;height:5.3px;background:#2f92e8;"></div>
<span style="left:1040.20px;top:1170.07px;font-size:13.5px;line-height:13.5px;color:#1c2b34;">57.5 ms</span>
<div style="left:1027.6px;top:1186.25px;width:60.6px;height:5.3px;background:#dfe3ee;"></div>
<div style="left:1027.6px;top:1186.25px;width:3.333px;height:5.3px;background:#2f92e8;"></div>
<span style="left:1195.50px;top:1170.07px;font-size:13.5px;line-height:13.5px;color:#1c2b34;transform:scaleX(0.9421);">3.4%</span>
<div style="left:1163.9px;top:1186.25px;width:60.6px;height:5.3px;background:#dfe3ee;"></div>
<div style="left:1163.9px;top:1186.25px;width:2.0604px;height:5.3px;background:#2f92e8;"></div>
<span style="left:1327.40px;top:1170.07px;font-size:13.5px;line-height:13.5px;color:#1c2b34;transform:scaleX(0.9557);">100%</span>
<div style="left:1299.8px;top:1186.25px;width:60.6px;height:5.3px;background:#dfe3ee;"></div>
<div style="left:1299.8px;top:1186.25px;width:60.6px;height:5.3px;background:#2f92e8;"></div>
<div style="left:91.25px;top:1207.1px;width:20.5px;height:20.5px;background:#8d6ec0;border-radius:4px;"><svg style="position:absolute;left:2.25px;top:2.25px" width="16" height="16" viewBox="0 0 16 16"><g fill="none" stroke="#fff" stroke-width="1.2"><ellipse cx="8" cy="4.2" rx="4.8" ry="2.1"/><path d="M3.2 4.2v7.6c0 1.15 2.15 2.1 4.8 2.1s4.8-.95 4.8-2.1V4.2M3.2 6.7c0 1.15 2.15 2.1 4.8 2.1s4.8-.95 4.8-2.1M3.2 9.25c0 1.15 2.15 2.1 4.8 2.1s4.8-.95 4.8-2.1"/></g></svg></div>
<span style="left:151.25px;top:1210.07px;font-size:13.5px;line-height:13.5px;color:#1c2b34;letter-spacing:0.356px;">postgresdb</span>
<span style="left:252.50px;top:1210.07px;font-size:13.5px;line-height:13.5px;color:#1c2b34;transform:scaleX(0.9845);">postgres.query INSERT INTO Users ( Email, Username, Password, E…</span>
<span style="left:798.10px;top:1209.57px;font-size:13.5px;line-height:13.5px;color:#1c2b34;transform:scaleX(0.9717);">1.0</span>
<div style="left:755.75px;top:1225.8px;width:60.6px;height:5.3px;background:#dfe3ee;"></div>
<div style="left:755.75px;top:1225.8px;width:60.6px;height:5.3px;background:#2f92e8;"></div>
<span style="left:915.85px;top:1209.57px;font-size:13.5px;line-height:13.5px;color:#1c2b34;transform:scaleX(0.9535);">99.8%</span>
<div style="left:891.75px;top:1225.8px;width:60.6px;height:5.3px;background:#dfe3ee;"></div>
<div style="left:891.75px;top:1225.8px;width:60.6px;height:5.3px;background:#2f92e8;"></div>
<span style="left:1043.70px;top:1209.57px;font-size:13.5px;line-height:13.5px;color:#1c2b34;letter-spacing:0.044px;">920 ms</span>
<div style="left:1027.6px;top:1225.8px;width:60.6px;height:5.3px;background:#dfe3ee;"></div>
<div style="left:1027.6px;top:1225.8px;width:49.692px;height:5.3px;background:#2f92e8;"></div>
<span style="left:1188.20px;top:1209.57px;font-size:13.5px;line-height:13.5px;color:#1c2b34;transform:scaleX(0.9482);">32.0%</span>
<div style="left:1163.9px;top:1225.8px;width:60.6px;height:5.3px;background:#dfe3ee;"></div>
<div style="left:1163.9px;top:1225.8px;width:19.392px;height:5.3px;background:#2f92e8;"></div>
<span style="left:1323.40px;top:1209.57px;font-size:13.5px;line-height:13.5px;color:#1c2b34;transform:scaleX(0.9665);">66.0%</span>
<div style="left:1299.8px;top:1225.8px;width:60.6px;height:5.3px;background:#dfe3ee;"></div>
<div style="left:1299.8px;top:1225.8px;width:39.996px;height:5.3px;background:#2f92e8;"></div>
<div style="left:91.25px;top:1246.7px;width:20.5px;height:20.5px;background:#8d6ec0;border-radius:4px;"><svg style="position:absolute;left:2.25px;top:2.25px" width="16" height="16" viewBox="0 0 16 16"><g fill="none" stroke="#fff" stroke-width="1.2"><ellipse cx="8" cy="4.2" rx="4.8" ry="2.1"/><path d="M3.2 4.2v7.6c0 1.15 2.15 2.1 4.8 2.1s4.8-.95 4.8-2.1V4.2M3.2 6.7c0 1.15 2.15 2.1 4.8 2.1s4.8-.95 4.8-2.1M3.2 9.25c0 1.15 2.15 2.1 4.8 2.1s4.8-.95 4.8-2.1"/></g></svg></div>
<span style="left:151.25px;top:1249.57px;font-size:13.5px;line-height:13.5px;color:#1c2b34;letter-spacing:0.356px;">postgresdb</span>
<span style="left:252.50px;top:1249.57px;font-size:13.5px;line-height:13.5px;color:#1c2b34;transform:scaleX(0.9837);">postgres.query INSERT INTO Teams ( Team_name, Created_at, Ena…</span>
<span style="left:798.10px;top:1249.07px;font-size:13.5px;line-height:13.5px;color:#1c2b34;transform:scaleX(0.9717);">1.0</span>
<div style="left:755.75px;top:1265.35px;width:60.6px;height:5.3px;background:#dfe3ee;"></div>
<div style="left:755.75px;top:1265.35px;width:60.6px;height:5.3px;background:#2f92e8;"></div>
<span style="left:919.85px;top:1249.07px;font-size:13.5px;line-height:13.5px;color:#1c2b34;transform:scaleX(0.9412);">100%</span>
<div style="left:891.75px;top:1265.35px;width:60.6px;height:5.3px;background:#dfe3ee;"></div>
<div style="left:891.75px;top:1265.35px;width:60.6px;height:5.3px;background:#2f92e8;"></div>
<span style="left:1040.20px;top:1249.07px;font-size:13.5px;line-height:13.5px;color:#1c2b34;">52.9 ms</span>
<div style="left:1027.6px;top:1265.35px;width:60.6px;height:5.3px;background:#dfe3ee;"></div>
<div style="left:1027.6px;top:1265.35px;width:2.727px;height:5.3px;background:#2f92e8;"></div>
<span style="left:1188.20px;top:1249.07px;font-size:13.5px;line-height:13.5px;color:#1c2b34;transform:scaleX(0.9482);">16.7%</span>
<div style="left:1163.9px;top:1265.35px;width:60.6px;height:5.3px;background:#dfe3ee;"></div>
<div style="left:1163.9px;top:1265.35px;width:10.1202px;height:5.3px;background:#2f92e8;"></div>
<span style="left:1330.80px;top:1249.07px;font-size:13.5px;line-height:13.5px;color:#1c2b34;transform:scaleX(0.9616);">0.2%</span>
<div style="left:1299.8px;top:1265.35px;width:60.6px;height:5.3px;background:#dfe3ee;"></div>
<div style="left:91.25px;top:1286.3px;width:20.5px;height:20.5px;background:#8d6ec0;border-radius:4px;"><svg style="position:absolute;left:2.25px;top:2.25px" width="16" height="16" viewBox="0 0 16 16"><g fill="none" stroke="#fff" stroke-width="1.25"><circle cx="8" cy="8" r="6.2"/><ellipse cx="8" cy="8" rx="2.7" ry="6.2"/><path d="M1.8 8h12.4"/></g></svg></div>
<span style="left:151.25px;top:1289.07px;font-size:13.5px;line-height:13.5px;color:#1c2b34;letter-spacing:0.500px;transform:scaleX(1.0060);">auth-dotnet</span>
<span style="left:252.50px;top:1289.07px;font-size:13.5px;line-height:13.5px;color:#1c2b34;letter-spacing:0.094px;">aspnet_core_mvc.request POST /admin/create-user</span>
<span style="left:798.10px;top:1288.57px;font-size:13.5px;line-height:13.5px;color:#1c2b34;transform:scaleX(0.9717);">1.0</span>
<div style="left:755.75px;top:1304.9px;width:60.6px;height:5.3px;background:#dfe3ee;"></div>
<div style="left:755.75px;top:1304.9px;width:60.6px;height:5.3px;background:#2f92e8;"></div>
<span style="left:919.85px;top:1288.57px;font-size:13.5px;line-height:13.5px;color:#1c2b34;transform:scaleX(0.9412);">100%</span>
<div style="left:891.75px;top:1304.9px;width:60.6px;height:5.3px;background:#dfe3ee;"></div>
<div style="left:891.75px;top:1304.9px;width:60.6px;height:5.3px;background:#2f92e8;"></div>
<span style="left:1060.00px;top:1288.57px;font-size:13.5px;line-height:13.5px;color:#1c2b34;transform:scaleX(0.9631);">1.0 s</span>
<div style="left:1027.6px;top:1304.9px;width:60.6px;height:5.3px;background:#dfe3ee;"></div>
<div style="left:1027.6px;top:1304.9px;width:56.358px;height:5.3px;background:#2f92e8;"></div>
<span style="left:1195.50px;top:1288.57px;font-size:13.5px;line-height:13.5px;color:#1c2b34;transform:scaleX(0.9421);">7.5%</span>
<div style="left:1163.9px;top:1304.9px;width:60.6px;height:5.3px;background:#dfe3ee;"></div>
<div style="left:1163.9px;top:1304.9px;width:4.545px;height:5.3px;background:#2f92e8;"></div>
<span style="left:1348.00px;top:1289.50px;font-size:13px;line-height:13px;color:#8d909d;">—</span>
</div></body></html>
